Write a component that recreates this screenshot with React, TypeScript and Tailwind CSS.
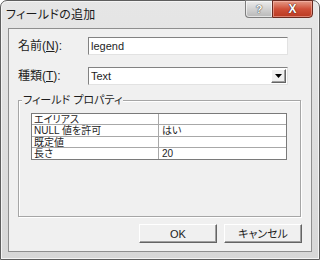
import React from "react";

const jp = "font-['Liberation_Sans','Noto_Sans_CJK_JP',sans-serif] [font-feature-settings:'palt']";

interface PropRow {
  name: string;
  value: string;
  h: string;
}

const rows: PropRow[] = [
  { name: "エイリアス", value: "", h: "h-[11px] border-b" },
  { name: "NULL 値を許可", value: "はい", h: "h-[12px] border-b" },
  { name: "既定値", value: "", h: "h-[11px] border-b" },
  { name: "長さ", value: "20", h: "h-[11px]" },
];

function ClassicButton({ label }: { label: string }) {
  return (
    <button className="w-[78px] h-[19px] flex items-center justify-center bg-[#f0f0f0] border-t border-l border-t-[#ffffff] border-l-[#ffffff] border-b border-r border-b-[#646464] border-r-[#646464] shadow-[inset_-1px_-1px_0_#a0a0a0] text-[11px] leading-[12px] text-[#222]">
      {label}
    </button>
  );
}

export default function App() {
  return (
    <div className={`w-[320px] h-[260px] flex flex-col border border-[#5e5e5e] rounded-t-[7px] bg-gradient-to-b from-[#e6e6e6] to-[#d7d7d7] shadow-[inset_0_0_0_1px_#f4f4f4] ${jp}`}>
      {/* Title bar */}
      <div className="h-[27px] flex items-start justify-between pl-[5px] pr-[6px]">
        <span className="self-center text-[12px] leading-[14px] text-[#1a1a1a] tracking-[0.3px]">
          フィールドの追加
        </span>
        <div className="flex -mt-px">
          <div className="w-[27px] h-[18px] flex items-center justify-center border border-[#7e7e7e] border-r-0 rounded-bl-[4px] bg-gradient-to-b from-[#ececec] via-[#d2d2d2] to-[#b8b8b8] shadow-[inset_0_0_0_1px_rgba(255,255,255,0.6)]">
            <span className="font-['Liberation_Sans',sans-serif] font-bold text-[11px] leading-[11px] text-white [text-shadow:0_0_1px_#333,0_0_1px_#333]">
              ?
            </span>
          </div>
          <div className="w-[41px] h-[18px] flex items-center justify-center border border-[#6a2a20] rounded-br-[4px] bg-gradient-to-b from-[#e39a87] via-[#cf4f38] to-[#b93a22] shadow-[inset_0_0_0_1px_rgba(255,200,190,0.5)]">
            <span className="font-['Liberation_Sans',sans-serif] font-bold text-[12px] leading-[12px] text-white [text-shadow:0_0_1px_#3a1510,0_0_1px_#3a1510]">
              X
            </span>
          </div>
        </div>
      </div>

      {/* Client area */}
      <div className="flex-1 mx-[7px] mb-[7px] border border-[#8e8e8e] bg-[#f0f0f0] pt-[8px] flex flex-col text-[#1e1e1e]">
        <div className="flex items-center h-[18px] pl-[9px]">
          <span className="w-[70px] text-[12px] leading-[14px]">
            名前(<span className="underline underline-offset-1">N</span>):
          </span>
          <div className="w-[200px] h-[18px] bg-white border-t border-l border-t-[#828282] border-l-[#828282] border-b border-r border-b-[#e2e2e2] border-r-[#e2e2e2] flex items-center pl-[2px]">
            <span className="text-[11px] leading-[12px]">legend</span>
          </div>
        </div>

        <div className="flex items-center h-[18px] pl-[9px] mt-[12px]">
          <span className="w-[70px] text-[12px] leading-[14px]">
            種類(<span className="underline underline-offset-1">T</span>):
          </span>
          <div className="w-[200px] h-[18px] bg-white border-t border-l border-t-[#828282] border-l-[#828282] border-b border-r border-b-[#e2e2e2] border-r-[#e2e2e2] flex items-center pl-[2px]">
            <span className="text-[11px] leading-[12px]">Text</span>
            <div className="ml-auto mr-px w-[15px] h-[14px] flex items-center justify-center bg-[#f0f0f0] border-t border-l border-t-white border-l-white border-b border-r border-b-[#646464] border-r-[#646464] shadow-[inset_-1px_-1px_0_#a0a0a0]">
              <svg width="7" height="4" viewBox="0 0 7 4">
                <path d="M0 0h7L3.5 4z" fill="#000" />
              </svg>
            </div>
          </div>
        </div>

        {/* Group box */}
        <div className="relative ml-[9px] mt-[15px] w-[283px] h-[117px] border border-[#a6a6a6] shadow-[inset_1px_1px_0_#fff,1px_1px_0_#fff]">
          <span className="absolute -top-[7px] left-[3px] px-px bg-[#f0f0f0] text-[11px] leading-[12px]">
            フィールド プロパティ
          </span>
          <div className="ml-[12px] mt-[12px] w-[256px] border border-[#7a7a7a] bg-white">
            {rows.map((r) => (
              <div key={r.name} className={`flex border-[#a8a8a8] ${r.h}`}>
                <div className="w-[127px] border-r border-[#a8a8a8] pl-[2px] text-[10px] leading-[11px] whitespace-nowrap">
                  {r.name}
                </div>
                <div className="flex-1 pl-[3px] text-[10px] leading-[11px]">{r.value}</div>
              </div>
            ))}
          </div>
        </div>

        <div className="flex justify-end gap-[7px] mt-[7px] pr-[9px]">
          <ClassicButton label="OK" />
          <ClassicButton label="キャンセル" />
        </div>
      </div>
    </div>
  );
}
